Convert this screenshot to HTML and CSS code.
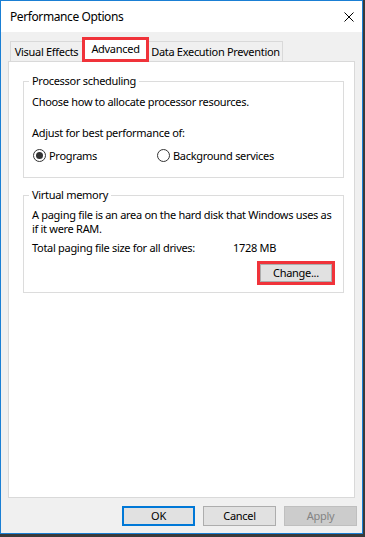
FILE: index.html
```html
<!DOCTYPE html>
<html>
<head>
<meta charset="utf-8">
<link rel="stylesheet" href="styles.css">
</head>
<body>
<div class="window">
  <div class="titlebar">
    <span class="title">Performance Options</span>
    <svg class="close" width="10" height="10" viewBox="0 0 10 10"><path d="M0.5 0.5 L9.5 9.5 M9.5 0.5 L0.5 9.5" stroke="#000" stroke-width="1" fill="none"/></svg>
  </div>
  <div class="body">
    <div class="tabs">
      <div class="tab tab-ve">Visual Effects</div>
      <div class="tab tab-adv active">Advanced</div>
      <div class="tab tab-dep">Data Execution Prevention</div>
    </div>
    <div class="panel">
      <fieldset class="group group-proc">
        <legend>Processor scheduling</legend>
        <div class="group-inner">
          <p class="line l-choose">Choose how to allocate processor resources.</p>
          <p class="line l-adjust">Adjust for best performance of:</p>
          <div class="radios">
            <label class="radio radio-first"><span class="dot checked"></span>Programs</label>
            <label class="radio"><span class="dot"></span>Background services</label>
          </div>
        </div>
      </fieldset>
      <fieldset class="group group-vm">
        <legend>Virtual memory</legend>
        <div class="group-inner">
          <p class="para">A paging file is an area on the hard disk that Windows uses as if it were RAM.</p>
          <div class="total"><span class="total-label">Total paging file size for all drives:</span><span>1728 MB</span></div>
          <div class="change-row"><button class="btn btn-change">Change...</button></div>
        </div>
      </fieldset>
    </div>
    <div class="buttons">
      <button class="btn btn-default">OK</button>
      <button class="btn">Cancel</button>
      <button class="btn btn-disabled">Apply</button>
    </div>
  </div>
</div>
</body>
</html>
```
FILE: styles.css
```css
* { box-sizing: border-box; }
html, body { margin: 0; padding: 0; }
body {
  background: #3a3a3a;
  width: 365px;
  height: 537px;
  font-family: "Noto Sans", "DejaVu Sans", sans-serif;
  font-size: 11px;
  letter-spacing: -0.3px;
  color: #000;
}
.window {
  width: 363px;
  height: 534px;
  border: 1px solid #1a7fd4;
  display: flex;
  flex-direction: column;
  background: #f0f0f0;
}
.titlebar {
  height: 31px;
  background: #fff;
  display: flex;
  align-items: center;
  justify-content: space-between;
  padding: 0 8px 0 9px;
}
.title { font-size: 12px; letter-spacing: -0.4px; line-height: 14px; }
.close { display: block; margin-top: 1px; }
.body {
  flex: 1;
  display: flex;
  flex-direction: column;
  padding-top: 5px;
}
.tabs {
  display: flex;
  align-items: flex-end;
  margin: 0 7px 0 9px;
  height: 24px;
}
.tab {
  height: 20px;
  border: 1px solid #d9d9d9;
  border-bottom: none;
  background: #f0f0f0;
  display: flex;
  align-items: center;
  justify-content: center;
  line-height: 14px;
  padding-top: 1px;
  white-space: nowrap;
}
.tab-ve { width: 72px; border-right: none; }
.tab-dep { width: 134px; border-left: none; }
.tab.active {
  width: 67px;
  height: 25px;
  margin-bottom: -1px;
  background: #fff;
  border: 3px solid #f0333a;
  position: relative;
  z-index: 1;
  padding-top: 0;
  padding-bottom: 2px;
}
.panel {
  flex: 1;
  margin: 0 7px;
  background: #fff;
  border: 1px solid #d9d9d9;
  padding: 12px 10px 0 14px;
}
.group {
  margin: 0;
  padding: 0;
  border: 1px solid #dcdcdc;
  min-width: 0;
}
.group legend {
  margin-left: 5px;
  padding: 0 3px;
  line-height: 14px;
}
.group-inner { padding: 0 8px; }
.line { margin: 0; line-height: 15px; }
.l-choose { margin-top: 6px; }
.l-adjust { margin-top: 16px; }
.radios {
  display: flex;
  align-items: center;
  margin-top: 8px;
  margin-bottom: 14px;
  height: 15px;
}
.radio {
  display: flex;
  align-items: center;
  gap: 3px;
  margin-left: 1px;
}
.radio-first { width: 123px; }
.dot {
  width: 13px;
  height: 13px;
  border: 1px solid #333;
  border-radius: 50%;
  background: #fff;
  display: flex;
  align-items: center;
  justify-content: center;
}
.dot.checked::after {
  content: "";
  width: 7px;
  height: 7px;
  border-radius: 50%;
  background: #333;
}
.group-vm { margin-top: 10px; }
.para { margin: 6px 0 0; line-height: 14px; }
.total {
  display: flex;
  line-height: 14px;
  margin-top: 5px;
}
.total-label { width: 201px; }
.change-row {
  display: flex;
  justify-content: flex-end;
  margin-top: 9px;
  margin-bottom: 10px;
  padding-right: 3px;
}
.btn {
  font-family: inherit;
  font-size: 11px;
  letter-spacing: -0.3px;
  color: #000;
  width: 73px;
  height: 20px;
  background: #e1e1e1;
  border: 1px solid #adadad;
  padding: 0;
  line-height: 14px;
}
.btn-change {
  width: 72px;
  height: 18px;
  outline: 3px solid #f0333a;
}
.buttons {
  display: flex;
  justify-content: flex-end;
  gap: 8px;
  padding: 8px 5px 7px 0;
}
.btn-default { border: 2px solid #0078d7; }
.btn-disabled {
  background: #cccccc;
  border-color: #bfbfbf;
  color: #838383;
}
```
